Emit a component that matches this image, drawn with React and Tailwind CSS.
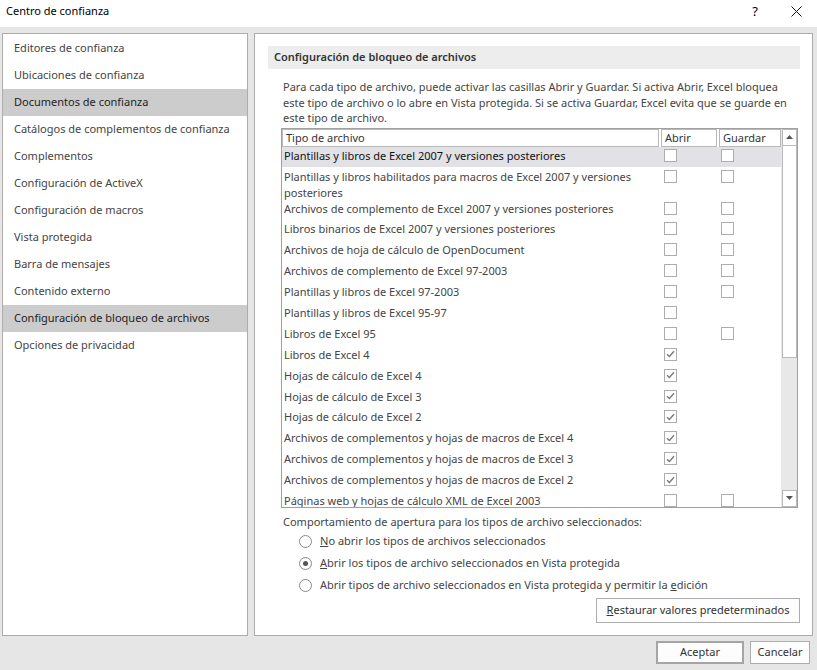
import React from "react";

const navItems = [
  ["Editores de confianza", false],
  ["Ubicaciones de confianza", false],
  ["Documentos de confianza", true],
  ["Catálogos de complementos de confianza", false],
  ["Complementos", false],
  ["Configuración de ActiveX", false],
  ["Configuración de macros", false],
  ["Vista protegida", false],
  ["Barra de mensajes", false],
  ["Contenido externo", false],
  ["Configuración de bloqueo de archivos", true],
  ["Opciones de privacidad", false],
];

// [text, abrir (null=no box, false=unchecked, true=checked), guardar]
const rows = [
  ["Plantillas y libros de Excel 2007 y versiones posteriores", false, false],
  ["Plantillas y libros habilitados para macros de Excel 2007 y versiones posteriores", false, false],
  ["Archivos de complemento de Excel 2007 y versiones posteriores", false, false],
  ["Libros binarios de Excel 2007 y versiones posteriores", false, false],
  ["Archivos de hoja de cálculo de OpenDocument", false, false],
  ["Archivos de complemento de Excel 97-2003", false, false],
  ["Plantillas y libros de Excel 97-2003", false, false],
  ["Plantillas y libros de Excel 95-97", false, null],
  ["Libros de Excel 95", false, false],
  ["Libros de Excel 4", true, null],
  ["Hojas de cálculo de Excel 4", true, null],
  ["Hojas de cálculo de Excel 3", true, null],
  ["Hojas de cálculo de Excel 2", true, null],
  ["Archivos de complementos y hojas de macros de Excel 4", true, null],
  ["Archivos de complementos y hojas de macros de Excel 3", true, null],
  ["Archivos de complementos y hojas de macros de Excel 2", true, null],
  ["Páginas web y hojas de cálculo XML de Excel 2003", false, false],
];

function Box({ checked }) {
  if (checked === null) return null;
  return (
    <div className="w-[13px] h-[13px] border border-[#adadad] bg-white flex items-center justify-center">
      {checked && (
        <svg width="9" height="8" viewBox="0 0 9 8">
          <path d="M1 4.2 L3.4 6.5 L8 1.2" stroke="#7a7a7a" strokeWidth="1.4" fill="none" />
        </svg>
      )}
    </div>
  );
}

function Radio({ checked }) {
  return (
    <div className="w-[13px] h-[13px] rounded-full border border-[#8a8a8a] bg-white flex items-center justify-center shrink-0">
      {checked && <div className="w-[5px] h-[5px] rounded-full bg-[#555]" />}
    </div>
  );
}

export default function App() {
  return (
    <div
      className="w-[817px] h-[670px] bg-[#e6e6e6] flex flex-col text-[11px] text-[#444] overflow-hidden"
      style={{ fontFamily: '"Noto Sans", "Open Sans", sans-serif' }}
    >
      {/* Title bar */}
      <div className="h-[27px] bg-white flex items-center shrink-0">
        <div className="pl-[6px] text-[11px] text-black flex-1 -mt-[4px]">Centro de confianza</div>
        <div className="text-black text-[13px] w-[20px] text-center mr-[26px] -mt-[4px]">?</div>
        <div className="mr-[15px] -mt-[4px]">
          <svg width="11" height="11" viewBox="0 0 11 11">
            <path d="M0.5 0.5 L10.5 10.5 M10.5 0.5 L0.5 10.5" stroke="#111" strokeWidth="1" />
          </svg>
        </div>
      </div>

      {/* Content */}
      <div className="flex gap-[6px] pl-[2px] pr-[4px] pt-[6px] h-[609px] shrink-0">
        {/* Left nav */}
        <div className="w-[246px] h-[603px] bg-white border border-[#acacac] pt-[1px]">
          {navItems.map(([t, sel]) => (
            <div
              key={t}
              className={`h-[27px] flex items-center pl-[11px] whitespace-nowrap ${sel ? "bg-[#cccccc] text-[#222]" : ""}`}
            >
              {t}
            </div>
          ))}
        </div>

        {/* Right panel */}
        <div className="flex-1 h-[603px] bg-white border border-[#acacac] pl-[13px] pr-[12px] pt-[12px] flex flex-col">
          <div className="h-[23px] bg-[#ededed] flex items-center pl-[6px] font-semibold text-[#333] shrink-0">
            Configuración de bloqueo de archivos
          </div>
          <div className="pl-[15px] pr-[2px] pt-[10px] leading-[15.5px] shrink-0">
            Para cada tipo de archivo, puede activar las casillas Abrir y Guardar. Si activa Abrir, Excel bloquea
            este tipo de archivo o lo abre en Vista protegida. Si se activa Guardar, Excel evita que se guarde en
            este tipo de archivo.
          </div>

          {/* Table */}
          <div className="ml-[13px] mr-[2px] mt-[2px] h-[380px] shrink-0 border border-[#a0a0a0] flex overflow-hidden">
            <div className="flex-1 flex flex-col overflow-hidden">
              {/* header */}
              <div className="h-[18px] flex shrink-0 text-[#333]">
                <div className="w-[377px] border border-[#b9b9b9] pl-[3px] flex items-center leading-none mr-[2px]">Tipo de archivo</div>
                <div className="w-[56px] border border-[#b9b9b9] pl-[3px] flex items-center leading-none mr-[2px]">Abrir</div>
                <div className="flex-1 border border-[#b9b9b9] pl-[3px] flex items-center leading-none">Guardar</div>
              </div>
              {rows.map(([t, a, g], i) => (
                <div
                  key={t}
                  className={`flex shrink-0 ${i === 1 ? "h-[32px] pt-[2px]" : i === 0 ? "h-[20px] pt-[1px]" : "h-[20.9px] pt-[2px]"} ${i === 0 ? "bg-[#e2e2e6] text-[#111]" : ""}`}
                >
                  <div className="w-[379px] pl-[2px] pr-[20px] leading-[16px]">{t}</div>
                  <div className="w-[58px] pl-[3px] pt-[1px]">
                    <Box checked={a} />
                  </div>
                  <div className="flex-1 pl-[2px] pt-[1px]">
                    <Box checked={g} />
                  </div>
                </div>
              ))}
            </div>
            {/* scrollbar */}
            <div className="w-[16px] bg-[#e8e8e8] flex flex-col border-l border-[#e8e8e8]">
              <div className="h-[17px] bg-white border border-[#b9b9b9] flex items-center justify-center">
                <svg width="7" height="4" viewBox="0 0 7 4"><path d="M0 4 L3.5 0 L7 4 Z" fill="#555" /></svg>
              </div>
              <div className="h-[212px] bg-white border-x border-b border-[#b9b9b9]" />
              <div className="flex-1" />
              <div className="h-[17px] bg-white border border-[#b9b9b9] flex items-center justify-center">
                <svg width="7" height="4" viewBox="0 0 7 4"><path d="M0 0 L7 0 L3.5 4 Z" fill="#555" /></svg>
              </div>
            </div>
          </div>

          <div className="pl-[15px] pt-[5px] leading-[17px] shrink-0">
            Comportamiento de apertura para los tipos de archivo seleccionados:
          </div>
          <div className="pl-[31px] pt-[1px] flex flex-col shrink-0">
            <div className="h-[22px] flex items-center gap-[8px]">
              <Radio />
              <span><u>N</u>o abrir los tipos de archivos seleccionados</span>
            </div>
            <div className="h-[22px] flex items-center gap-[8px]">
              <Radio checked />
              <span><u>A</u>brir los tipos de archivo seleccionados en Vista protegida</span>
            </div>
            <div className="h-[22px] flex items-center gap-[8px]">
              <Radio />
              <span>Abrir tipos de archivo seleccionados en Vista protegida y permitir la <u>e</u>dición</span>
            </div>
          </div>
          <div className="flex justify-end pt-[1px] shrink-0">
            <button className="h-[25px] w-[204px] border border-[#adadad] bg-[#fdfdfd] text-[#333] flex items-center justify-center">
              <span><u>R</u>estaurar valores predeterminados</span>
            </button>
          </div>
        </div>
      </div>

      {/* Footer */}
      <div className="flex justify-end gap-[6px] pr-[7px] pt-[5px]">
        <button className="w-[88px] h-[23px] border-2 border-[#a5a5a5] bg-[#fdfdfd] text-[#333] flex items-center justify-center">
          Aceptar
        </button>
        <button className="w-[60px] h-[23px] border border-[#adadad] bg-[#fdfdfd] text-[#333] flex items-center justify-center">
          Cancelar
        </button>
      </div>
    </div>
  );
}
